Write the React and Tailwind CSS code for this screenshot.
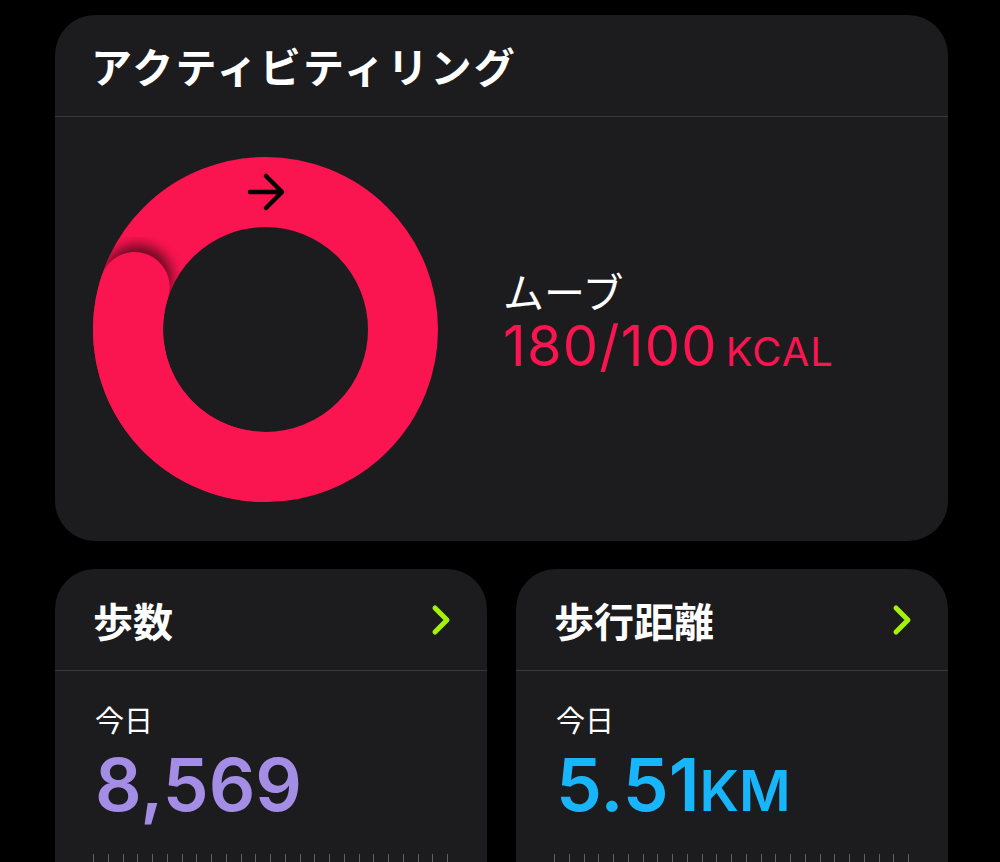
import React from 'react';

const JP = { fontFamily: '"Noto Sans CJK JP", "Noto Sans", sans-serif' };
const NUM = { fontFamily: 'Inter, "Noto Sans", sans-serif' };

const R = 137.5;
const C = 172.5;

function pt(deg) {
  const a = (deg * Math.PI) / 180;
  return [C + R * Math.cos(a), C + R * Math.sin(a)];
}

function MoveRing() {
  const [ex, ey] = pt(198);
  const [sx, sy] = pt(90);
  return (
    <svg width="345" height="345" viewBox="0 0 345 345" className="shrink-0">
      <defs>
        <mask id="ringMask">
          <circle cx={C} cy={C} r={R} fill="none" stroke="#fff" strokeWidth="70" />
        </mask>
        <filter id="blur" x="-50%" y="-50%" width="200%" height="200%">
          <feGaussianBlur stdDeviation="6" />
        </filter>
      </defs>
      <circle cx={C} cy={C} r={R} fill="none" stroke="#fa1450" strokeWidth="70" />
      <g mask="url(#ringMask)">
        <circle cx={ex + 3} cy={ey - 8} r="35" fill="#000" opacity="0.55" filter="url(#blur)" />
      </g>
      <path
        d={`M ${sx} ${sy} A ${R} ${R} 0 0 1 ${ex} ${ey}`}
        fill="none"
        stroke="#fa1450"
        strokeWidth="70"
        strokeLinecap="round"
      />
      <g stroke="#000" strokeWidth="4.5" strokeLinecap="round" strokeLinejoin="round" fill="none">
        <path d="M 157 35 L 188 35" />
        <path d="M 173 19 L 189 35 L 173 51" />
      </g>
    </svg>
  );
}

function Chevron() {
  return (
    <svg width="20" height="32" viewBox="0 0 20 32" fill="none">
      <path d="M 4 4 L 16 16 L 4 28" stroke="#a4f20c" strokeWidth="5" strokeLinecap="round" strokeLinejoin="round" />
    </svg>
  );
}

function Ticks() {
  const ticks = Array.from({ length: 25 });
  return (
    <div className="flex justify-between w-[355px] h-[14px] mt-[33px] -ml-[2px]">
      {ticks.map((_, i) => (
        <div key={i} className="w-px h-full bg-[#606062]" />
      ))}
    </div>
  );
}

function StatCard({ title, value, unit, color }) {
  return (
    <div className="bg-[#1c1c1e] rounded-t-[40px] h-[300px] overflow-hidden">
      <div className="h-[102px] flex items-center justify-between pl-[38px] pr-[36px] border-b border-[#39393b]">
        <span className="text-white text-[40px] font-bold leading-none" style={JP}>{title}</span>
        <Chevron />
      </div>
      <div className="pl-[40px] pt-[33px]">
        <div className="text-white text-[29px] leading-[30px]" style={JP}>今日</div>
        <div className="mt-[14px] flex items-baseline leading-none font-semibold" style={{ ...NUM, color }}>
          <span className="text-[73px]">{value}</span>
          {unit && <span className="text-[56px]">{unit}</span>}
        </div>
        <Ticks />
      </div>
    </div>
  );
}

export default function App() {
  return (
    <div className="bg-black w-[1000px] h-[862px] overflow-hidden">
      <div className="ml-[55px] w-[893px] pt-[15px]">
        <div className="bg-[#1c1c1e] rounded-[40px]">
          <div className="h-[102px] flex items-center pl-[36px] border-b border-[#39393b]">
            <span className="text-white text-[41px] font-semibold leading-none tracking-[2.3px]" style={JP}>
              アクティビティリング
            </span>
          </div>
          <div className="h-[424px] flex items-center pl-[38px]">
            <MoveRing />
            <div className="ml-[65px] -mt-[14px]">
              <div className="text-white text-[41px] leading-[41px]" style={JP}>ムーブ</div>
              <div className="flex items-baseline text-[#fa1450] leading-none mt-[7px]" style={NUM}>
                <span className="text-[56px] tracking-[1.2px]">180/100</span>
                <span className="text-[40px] ml-[8px] tracking-[1px]">KCAL</span>
              </div>
            </div>
          </div>
        </div>
        <div className="grid grid-cols-2 gap-[29px] mt-[28px]">
          <StatCard title="歩数" value="8,569" color="#a48de5" />
          <StatCard title="歩行距離" value="5.51" unit="KM" color="#19b5fb" />
        </div>
      </div>
    </div>
  );
}
